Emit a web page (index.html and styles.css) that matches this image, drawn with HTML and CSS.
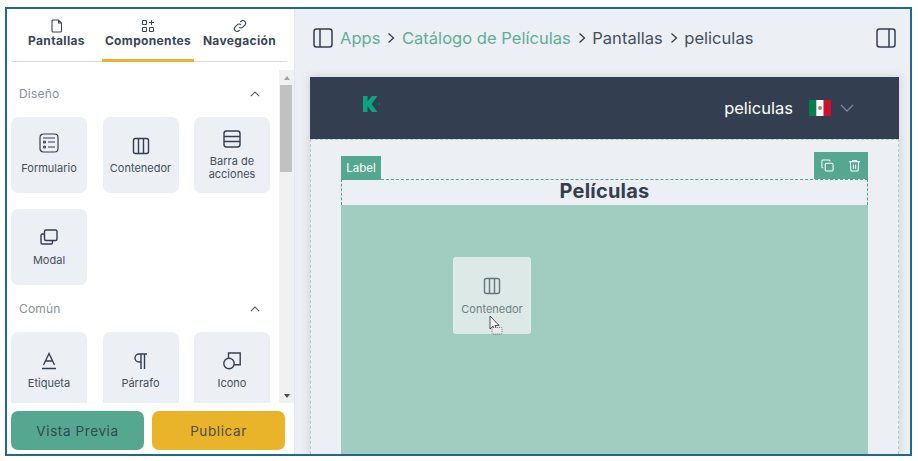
FILE: index.html
```html
<!DOCTYPE html>
<html lang="es">
<head>
<meta charset="utf-8">
<title>Catálogo de Películas</title>
<link rel="stylesheet" href="styles.css">
</head>
<body>
<div class="frame">
  <aside class="sidebar">
    <nav class="tabs">
      <div class="tab">
        <svg class="tab-icon" viewBox="0 0 14 14"><path d="M3 1h5.500l3 3v8a1 1 0 0 1-1 1H3a1 1 0 0 1-1-1V2a1 1 0 0 1 1-1zM8.500 1v3h3"/></svg>
        <span>Pantallas</span>
      </div>
      <div class="tab tab-active">
        <svg class="tab-icon" viewBox="0 0 14 14"><rect x="1.500" y="1.500" width="4" height="4" rx=".6"/><rect x="1.500" y="8.500" width="4" height="4" rx=".6"/><rect x="8.500" y="8.500" width="4" height="4" rx=".6"/><path d="M10.500 1v5M8 3.500h5"/></svg>
        <span>Componentes</span>
      </div>
      <div class="tab">
        <svg class="tab-icon" viewBox="0 0 14 14"><path d="M6 8a2.600 2.600 0 0 0 3.800.2l2.200-2.200a2.700 2.700 0 0 0-3.800-3.800L7.300 3"/><path d="M8 6a2.600 2.600 0 0 0-3.800-.2L2 8a2.700 2.700 0 0 0 3.800 3.800l.9-.8"/></svg>
        <span>Navegación</span>
      </div>
    </nav>
    <div class="panel">
      <div class="list">
        <div class="section-head"><span>Diseño</span><svg class="chev" viewBox="0 0 10 6"><path d="M.8 5.200 5 1l4.200 4.200"/></svg></div>
        <div class="cards">
          <div class="card">
            <svg class="card-icon icon-raised" viewBox="0 0 20 20"><rect x="1" y="1" width="18" height="18" rx="3.500"/><circle cx="5.500" cy="9" r="1"/><circle cx="5.500" cy="14" r="1"/><path d="M9 9h7M9 14h7M4 5h12"/></svg>
            <span>Formulario</span>
          </div>
          <div class="card">
            <svg class="card-icon" viewBox="0 0 20 20"><rect x="2.500" y="2.500" width="15" height="15" rx="2"/><path d="M7.500 2.500v15M12.500 2.500v15"/></svg>
            <span>Contenedor</span>
          </div>
          <div class="card">
            <svg class="card-icon" viewBox="0 0 20 20"><rect x="2" y="2" width="16" height="16" rx="2.500"/><path d="M2 7.500h16M2 12.500h16"/></svg>
            <span>Barra de<br>acciones</span>
          </div>
          <div class="card">
            <svg class="card-icon" viewBox="0 0 20 20"><rect x="5.500" y="2" width="12.500" height="10.500" rx="1.500"/><path d="M5.500 6H3.500A1.500 1.500 0 0 0 2 7.500v7A1.500 1.500 0 0 0 3.500 16h8.500a1.500 1.500 0 0 0 1.500-1.500v-2"/></svg>
            <span>Modal</span>
          </div>
        </div>
        <div class="section-head"><span>Común</span><svg class="chev" viewBox="0 0 10 6"><path d="M.8 5.200 5 1l4.200 4.200"/></svg></div>
        <div class="cards">
          <div class="card">
            <svg class="card-icon" viewBox="0 0 20 20"><path d="M4.500 14 10 2.500 15.500 14M6.500 10h7M3 17.500h14"/></svg>
            <span>Etiqueta</span>
          </div>
          <div class="card">
            <svg class="card-icon" viewBox="0 0 20 20"><path d="M16 3H8a4 4 0 0 0 0 8h2M10 3v15M13.500 3v15"/></svg>
            <span>Párrafo</span>
          </div>
          <div class="card">
            <svg class="card-icon" viewBox="0 0 20 20"><circle cx="7" cy="12.500" r="5.200"/><path d="M6.500 7.300V2h11.700v11.700h-6"/></svg>
            <span>Icono</span>
          </div>
        </div>
      </div>
      <div class="scrollbar">
        <i class="arrow arrow-up"></i>
        <div class="track"><div class="thumb"></div></div>
        <i class="arrow arrow-down"></i>
      </div>
    </div>
    <div class="actions">
      <button class="btn btn-preview">Vista Previa</button>
      <button class="btn btn-publish">Publicar</button>
    </div>
  </aside>
  <main class="main">
    <header class="crumbs">
      <svg class="layout-icon" viewBox="0 0 20 20"><rect x="1" y="1" width="18" height="18" rx="2.500"/><path d="M7 1v18"/></svg>
      <a class="crumb-link">Apps</a>
      <svg class="sep" viewBox="0 0 8 12"><path d="M1.500 1.500 6.500 6l-5 4.500"/></svg>
      <a class="crumb-link">Catálogo de Películas</a>
      <svg class="sep" viewBox="0 0 8 12"><path d="M1.500 1.500 6.500 6l-5 4.500"/></svg>
      <span>Pantallas</span>
      <svg class="sep" viewBox="0 0 8 12"><path d="M1.500 1.500 6.500 6l-5 4.500"/></svg>
      <span>peliculas</span>
      <svg class="layout-icon layout-right" viewBox="0 0 20 20"><rect x="1" y="1" width="18" height="18" rx="2.500"/><path d="M13 1v18"/></svg>
    </header>
    <section class="preview">
      <div class="app-bar">
        <svg class="logo" viewBox="0 0 18 16"><path class="logo-k" d="M0 0h4.500v5.500L9 0h5.500L8.500 8l6 8H9L4.500 10v6H0z"/><circle class="logo-dot" cx="16" cy="8" r="1.700"/></svg>
        <span class="app-name">peliculas</span>
        <svg class="flag" viewBox="0 0 22 16"><rect width="7.300" height="16" fill="#0a7d4e"/><rect x="7.300" width="7.400" height="16" fill="#fff"/><rect x="14.700" width="7.300" height="16" fill="#d0112b"/><circle cx="11" cy="8" r="2" fill="#9a8a6a"/></svg>
        <svg class="app-chev" viewBox="0 0 14 8"><path d="M1 1l6 6 6-6"/></svg>
      </div>
      <div class="canvas">
        <div class="selected">
          <div class="tag">Label</div>
          <div class="tools">
            <svg viewBox="0 0 14 14"><rect x="4.500" y="4.500" width="8.500" height="8.500" rx="1.500"/><path d="M9.500 2.500V2A1 1 0 0 0 8.500 1H2a1 1 0 0 0-1 1v6.500a1 1 0 0 0 1 1h.5"/></svg>
            <svg viewBox="0 0 14 14"><path d="M1 3h12M5 3V1.500h4V3M2.500 3l.6 9a1 1 0 0 0 1 1h5.800a1 1 0 0 0 1-1l.6-9M5.800 6v4.500M8.200 6v4.500"/></svg>
          </div>
          <h1 class="title">Películas</h1>
        </div>
        <div class="dropzone">
          <div class="ghost">
            <svg class="ghost-icon" viewBox="0 0 20 20"><rect x="2.500" y="2.500" width="15" height="15" rx="2"/><path d="M7.500 2.500v15M12.500 2.500v15"/></svg>
            <span>Contenedor</span>
          </div>
          <svg class="cursor" viewBox="0 0 14 20"><path class="cursor-arrow" d="M1 1v13l3-2.800 2 4.300 2-.9-2-4.200h4z"/><rect class="cursor-hand" x="3" y="12.500" width="10" height="6.500" rx="1"/></svg>
        </div>
      </div>
    </section>
  </main>
</div>
</body>
</html>
```

FILE: styles.css
```css
* { box-sizing: border-box; }
html, body { margin: 0; padding: 0; background: #fff; overflow: hidden; }
body { width: 918px; height: 461px; font-family: Inter, "Open Sans", sans-serif; color: #333f50; }

.frame {
  display: flex;
  width: 907px;
  height: 449px;
  margin: 7px 0 0 5px;
  border: 2.500px solid #1f6a8c;
  overflow: hidden;
}

/* Sidebar */
.sidebar { width: 287px; flex: none; display: flex; flex-direction: column; background: #fff; }
.tabs {
  display: grid;
  grid-template-columns: 91px 92px 91px;
  margin: 0 7px 0 4px;
  height: 53px;
  border-bottom: 1px solid #d9dcdf;
}
.tab {
  display: flex;
  flex-direction: column;
  align-items: center;
  padding-top: 10px;
  font-size: 12px;
  letter-spacing: .35px;
  font-weight: 700;
  line-height: 14px;
  color: #3a4654;
  white-space: nowrap;
}
.tab-active { border-bottom: 3px solid #e9b32a; height: 53px; }
.tab-icon { width: 14px; height: 14px; fill: none; stroke: #3a4654; stroke-width: 1.100; margin-bottom: 1px; }

.panel { flex: 1; min-height: 0; display: flex; }
.list { flex: 1; padding: 8px 0 0 4px; overflow: hidden; }
.section-head {
  display: flex;
  align-items: center;
  justify-content: space-between;
  height: 47px;
  padding: 0 19px 0 8px;
  font-size: 12px;
  letter-spacing: .2px;
  color: #8a9099;
}
.chev { width: 10px; height: 6px; fill: none; stroke: #5b6470; stroke-width: 1.200; }
.cards { display: grid; grid-template-columns: repeat(3, 76px); gap: 16px 15.500px; }
.card {
  height: 76px;
  display: flex;
  flex-direction: column;
  align-items: center;
  justify-content: center;
  gap: 6px;
  background: #eceff3;
  border-radius: 7px;
  font-size: 11px;
  line-height: 13px;
  text-align: center;
  color: #444f5d;
}
.card-icon { width: 20px; height: 20px; flex: none; fill: none; stroke: #333f50; stroke-width: 1.400; }
.icon-raised { stroke-width: 1.200; margin-top: -3px; margin-bottom: 3px; }

.scrollbar {
  width: 15px;
  flex: none;
  margin-top: 8px;
  display: flex;
  flex-direction: column;
  align-items: stretch;
  background: #f1f1f1;
}
.arrow { height: 15px; flex: none; display: flex; align-items: center; justify-content: center; }
.arrow::before { content: ""; border-left: 3.500px solid transparent; border-right: 3.500px solid transparent; }
.arrow-up::before { border-bottom: 4px solid #a3a3a3; }
.arrow-down::before { border-top: 4px solid #505050; }
.track { flex: 1; }
.thumb { height: 87px; margin: 0 2px 0 1px; background: #c1c1c1; }

.actions { height: 51px; flex: none; display: flex; gap: 8px; padding: 8px 9px 0 4px; }
.btn {
  flex: 1;
  height: 39px;
  border: 0;
  border-radius: 7px;
  font: 400 13.500px Inter, "Open Sans", sans-serif;
  letter-spacing: .6px;
}
.btn-preview { background: #55a88f; color: #2f4a55; }
.btn-publish { background: #e9b32a; color: #524d42; }

/* Main */
.main { flex: 1; min-width: 0; display: flex; flex-direction: column; background: #eceff3; border-left: 1px solid #e4e7ea; }
.crumbs {
  height: 68px;
  flex: none;
  display: flex;
  align-items: center;
  padding: 0 14px 10px 18px;
  font-size: 16.500px;
  letter-spacing: .03px;
  color: #444f5d;
  white-space: nowrap;
}
.crumb-link { color: #62ad99; }
.layout-icon { width: 20px; height: 20px; flex: none; fill: none; stroke: #333f50; stroke-width: 1.500; margin-right: 7px; }
.layout-right { margin: 0 0 0 auto; }
.sep { width: 8px; height: 12px; flex: none; margin: 0 6.500px 0 7px; fill: none; stroke: #333f50; stroke-width: 1.300; }

.preview { flex: 1; margin: 0 11px 0 15px; display: flex; flex-direction: column; box-shadow: 0 0 9px rgba(40, 50, 70, .16); }
.app-bar { height: 62px; flex: none; display: flex; align-items: center; background: #333f50; padding-right: 45px; }
.logo { width: 18px; height: 16px; margin: 0 0 9px 53px; }
.logo-k { fill: #0ba583; }
.logo-dot { fill: #1f5f68; }
.app-name { margin-left: auto; font-size: 16.500px; color: #fff; }
.flag { width: 22px; height: 16px; margin: 0 9px 0 16px; }
.app-chev { width: 14px; height: 8px; fill: none; stroke: #7d8794; stroke-width: 1.300; }

.canvas {
  flex: 1;
  min-height: 0;
  padding: 39px 30px 0;
  display: flex;
  flex-direction: column;
  background: #eceff3;
  border: 1px dashed #a6d3c6;
  border-width: 1px 1px 0;
}
.selected { position: relative; height: 26px; flex: none; border: 1px dashed #4fa58b; border-bottom: 0; }
.tag {
  position: absolute;
  left: -1px;
  top: -24px;
  width: 40px;
  height: 24px;
  padding-top: 5px;
  background: #55a88f;
  color: #fff;
  font-size: 11.500px;
  line-height: 14px;
  text-align: center;
}
.tools {
  position: absolute;
  right: -1px;
  top: -28px;
  width: 54px;
  height: 27px;
  display: flex;
  align-items: center;
  justify-content: center;
  gap: 14px;
  background: #55a88f;
}
.tools svg { width: 13px; height: 13px; fill: none; stroke: #fff; stroke-width: 1.100; }
.title { margin: 0; font-size: 20px; letter-spacing: .2px; line-height: 22px; font-weight: 700; text-align: center; color: #333f50; }
.dropzone { position: relative; flex: 1; background: #a1ccc0; }
.ghost {
  position: absolute;
  left: 112px;
  top: 52px;
  width: 78px;
  height: 77px;
  display: flex;
  flex-direction: column;
  align-items: center;
  justify-content: center;
  gap: 7px;
  background: #dce9e7;
  border-radius: 3px;
  font-size: 11px;
  line-height: 13px;
  color: #6f7f7f;
}
.ghost-icon { width: 20px; height: 20px; fill: none; stroke: #66767a; stroke-width: 1.400; }
.cursor { position: absolute; left: 148px; top: 110px; width: 14px; height: 20px; }
.cursor-arrow { fill: #fff; stroke: #222; stroke-width: .8; }
.cursor-hand { fill: #e8ecec; stroke: #444; stroke-width: .7; stroke-dasharray: 1 1; }
```
